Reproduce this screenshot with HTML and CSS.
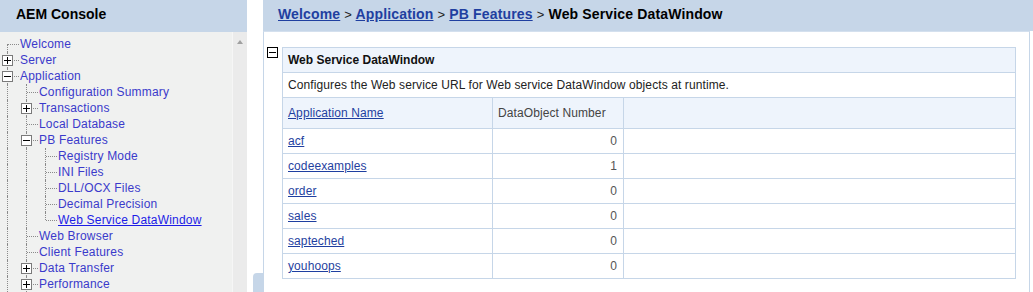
FILE: index.html
```html
<!DOCTYPE html>
<html>
<head>
<meta charset="utf-8">
<title>AEM Console</title>
<link rel="stylesheet" href="styles.css">
</head>
<body>
<div class="side">
  <div class="side-head">AEM Console</div>
  <div class="side-body">
    <div class="tree">
      <div class="row"><span class="cell c first"></span><a class="node">Welcome</a></div>
      <div class="row"><span class="cell c"><svg class="box" width="11" height="11" viewBox="0 0 11 11"><rect x="0.5" y="0.5" width="10" height="10" fill="#fff" stroke="#7a7a7a"/><path d="M2 5.5H9M5.5 2V9" stroke="#000"/></svg></span><a class="node">Server</a></div>
      <div class="row"><span class="cell c"><svg class="box" width="11" height="11" viewBox="0 0 11 11"><rect x="0.5" y="0.5" width="10" height="10" fill="#fff" stroke="#7a7a7a"/><path d="M2 5.5H9" stroke="#000"/></svg></span><a class="node">Application</a></div>
      <div class="row"><span class="cell"></span><span class="cell c"></span><a class="node">Configuration Summary</a></div>
      <div class="row"><span class="cell"></span><span class="cell c"><svg class="box" width="11" height="11" viewBox="0 0 11 11"><rect x="0.5" y="0.5" width="10" height="10" fill="#fff" stroke="#7a7a7a"/><path d="M2 5.5H9M5.5 2V9" stroke="#000"/></svg></span><a class="node">Transactions</a></div>
      <div class="row"><span class="cell"></span><span class="cell c"></span><a class="node">Local Database</a></div>
      <div class="row"><span class="cell"></span><span class="cell c"><svg class="box" width="11" height="11" viewBox="0 0 11 11"><rect x="0.5" y="0.5" width="10" height="10" fill="#fff" stroke="#7a7a7a"/><path d="M2 5.5H9" stroke="#000"/></svg></span><a class="node">PB Features</a></div>
      <div class="row"><span class="cell"></span><span class="cell"></span><span class="cell c"></span><a class="node">Registry Mode</a></div>
      <div class="row"><span class="cell"></span><span class="cell"></span><span class="cell c"></span><a class="node">INI Files</a></div>
      <div class="row"><span class="cell"></span><span class="cell"></span><span class="cell c"></span><a class="node">DLL/OCX Files</a></div>
      <div class="row"><span class="cell"></span><span class="cell"></span><span class="cell c"></span><a class="node">Decimal Precision</a></div>
      <div class="row"><span class="cell"></span><span class="cell"></span><span class="cell c last"></span><a class="node active">Web Service DataWindow</a></div>
      <div class="row"><span class="cell"></span><span class="cell c"></span><a class="node">Web Browser</a></div>
      <div class="row"><span class="cell"></span><span class="cell c"></span><a class="node">Client Features</a></div>
      <div class="row"><span class="cell"></span><span class="cell c"><svg class="box" width="11" height="11" viewBox="0 0 11 11"><rect x="0.5" y="0.5" width="10" height="10" fill="#fff" stroke="#7a7a7a"/><path d="M2 5.5H9M5.5 2V9" stroke="#000"/></svg></span><a class="node">Data Transfer</a></div>
      <div class="row"><span class="cell"></span><span class="cell c"><svg class="box" width="11" height="11" viewBox="0 0 11 11"><rect x="0.5" y="0.5" width="10" height="10" fill="#fff" stroke="#7a7a7a"/><path d="M2 5.5H9M5.5 2V9" stroke="#000"/></svg></span><a class="node">Performance</a></div>
    </div>
    <div class="vscroll"><span class="arrow"></span></div>
  </div>
</div>
<div class="gap"><div class="grip"></div></div>
<div class="main">
  <div class="crumbs"><a class="crumb">Welcome</a> <span class="sep">&gt;</span> <a class="crumb">Application</a> <span class="sep">&gt;</span> <a class="crumb">PB Features</a> <span class="sep">&gt;</span> <span class="here">Web Service DataWindow</span></div>
  <div class="content">
    <svg class="collapse" width="11" height="11" viewBox="0 0 11 11"><rect x="0.5" y="0.5" width="10" height="10" fill="#fff" stroke="#000"/><path d="M2 5.5H9" stroke="#000"/></svg>
    <div class="tablewrap">
      <table class="grid">
        <tr class="title"><td colspan="3">Web Service DataWindow</td></tr>
        <tr class="desc"><td colspan="3">Configures the Web service URL for Web service DataWindow objects at runtime.</td></tr>
        <tr class="head"><td class="c1"><a class="lnk">Application Name</a></td><td class="c2">DataObject Number</td><td class="c3"></td></tr>
        <tr class="data"><td><a class="lnk">acf</a></td><td class="num">0</td><td></td></tr>
        <tr class="data"><td><a class="lnk">codeexamples</a></td><td class="num one">1</td><td></td></tr>
        <tr class="data"><td><a class="lnk">order</a></td><td class="num">0</td><td></td></tr>
        <tr class="data"><td><a class="lnk">sales</a></td><td class="num">0</td><td></td></tr>
        <tr class="data"><td><a class="lnk">sapteched</a></td><td class="num">0</td><td></td></tr>
        <tr class="data"><td><a class="lnk">youhoops</a></td><td class="num">0</td><td></td></tr>
      </table>
    </div>
  </div>
</div>
</body>
</html>
```

FILE: styles.css
```css
html, body {
  margin: 0;
  padding: 0;
  background: #fff;
}
body {
  display: flex;
  height: 292px;
  overflow: hidden;
  font-family: "Liberation Sans", Arial, sans-serif;
}

/* left panel */
.side {
  width: 247px;
  flex: none;
  display: flex;
  flex-direction: column;
  background: #f0f1f0;
}
.side-head {
  height: 32px;
  line-height: 29px;
  background: #c6d6e8;
  font-weight: bold;
  font-size: 14px;
  color: #000;
  padding-left: 16px;
}
.side-body {
  flex: 1;
  display: flex;
  min-height: 0;
}
.tree {
  flex: 1;
  padding-top: 4px;
  overflow: hidden;
  font-size: 12px;
  letter-spacing: 0.2px;
}
.row {
  display: flex;
  height: 16px;
  line-height: 16px;
  white-space: nowrap;
}
.cell {
  width: 19px;
  height: 16px;
  flex: none;
  position: relative;
  display: flex;
  align-items: flex-start;
}
.cell::before {
  content: "";
  position: absolute;
  left: 7px;
  top: 0;
  bottom: 0;
  border-left: 1px dotted #8a8a8a;
}
.cell.first::before { top: 8px; }
.cell.last::before { bottom: 8px; }
.cell.c::after {
  content: "";
  position: absolute;
  left: 8px;
  right: 0;
  top: 8px;
  border-top: 1px dotted #8a8a8a;
}
.box {
  position: relative;
  z-index: 1;
  margin-left: 2px;
  margin-top: 3px;
  display: block;
}
.node {
  color: #3a3acb;
  padding-left: 1px;
  text-decoration: none;
}
.node.active {
  color: #1c1ce6;
  text-decoration: underline;
}
.vscroll {
  width: 15px;
  flex: none;
  background: #ebebeb;
  border-left: 1px solid #f6f6f6;
  display: flex;
  justify-content: center;
  padding-top: 8px;
  box-sizing: border-box;
}
.arrow {
  width: 0;
  height: 0;
  border-left: 3px solid transparent;
  border-right: 3px solid transparent;
  border-bottom: 4px solid #a0a0a0;
}

/* gap between frames */
.gap {
  width: 16px;
  flex: none;
  background: #fff;
  display: flex;
  flex-direction: column;
  justify-content: flex-end;
}
.grip {
  width: 10px;
  height: 19px;
  margin-left: 6px;
  background: #c6d6e8;
  border-top-left-radius: 4px;
}

/* main frame */
.main {
  flex: 1;
  display: flex;
  flex-direction: column;
  min-width: 0;
}
.crumbs {
  height: 31px;
  line-height: 28px;
  background: #c6d6e8;
  padding-left: 15px;
  font-size: 14px;
  font-weight: bold;
  letter-spacing: 0.15px;
  white-space: nowrap;
}
.crumb {
  color: #1f3fa0;
  text-decoration: underline;
}
.sep {
  font-weight: normal;
  font-size: 13px;
  color: #222;
}
.here {
  color: #000;
}
.content {
  flex: 1;
  margin-right: 3px;
  border-left: 1px solid #c6d6e8;
  border-right: 1px solid #c6d6e8;
  border-top: 1px solid #d4e0ee;
  display: flex;
  align-items: flex-start;
  padding-top: 15px;
}
.collapse {
  display: block;
  margin-left: 3px;
  flex: none;
}
.tablewrap {
  flex: 1;
  padding-left: 4px;
  padding-right: 13px;
}
.grid {
  width: 100%;
  border-collapse: collapse;
  border: 1px solid #c6d6e8;
  font-size: 12px;
  letter-spacing: 0.1px;
  color: #333;
}
.grid td {
  border: 1px solid #c6d6e8;
  padding: 0 5px;
  height: 24px;
  white-space: nowrap;
}
.grid tr.title td {
  background: #eef4fc;
  font-weight: bold;
  letter-spacing: 0;
  color: #111;
}
.grid tr.desc td {
  background: #fff;
  color: #222;
}
.grid tr.head td {
  background: #eef4fc;
  height: 30px;
  color: #444;
}
.grid td.c1 { width: 199px; }
.grid td.c2 { width: 120px; }
.grid td.num {
  text-align: right;
  padding-right: 6px;
  color: #555;
}
.lnk {
  color: #1f3fa0;
  text-decoration: underline;
}
```
